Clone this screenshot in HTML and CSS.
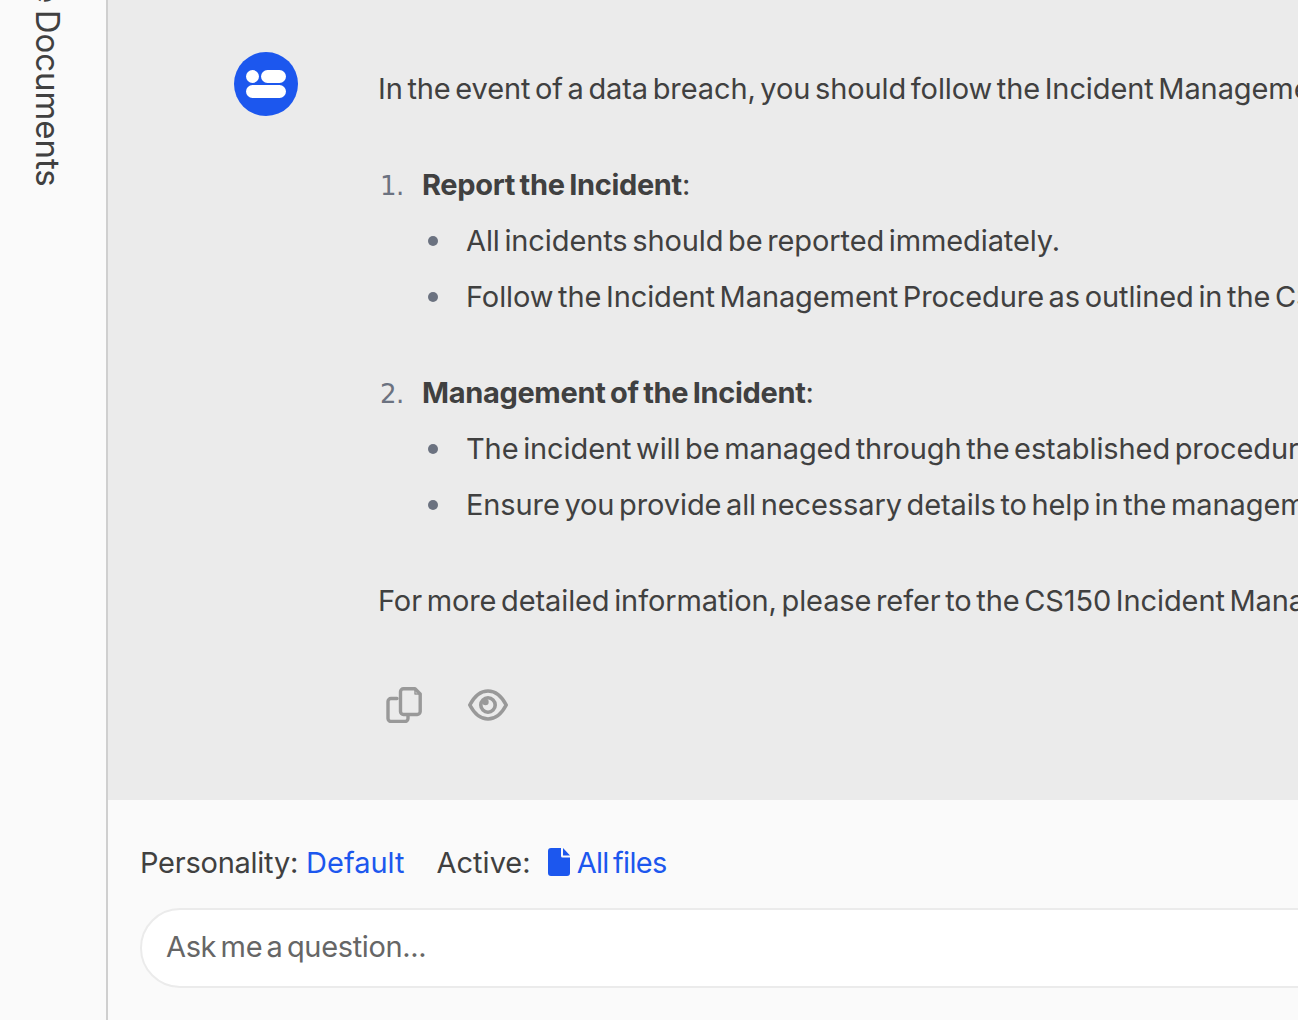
FILE: index.html
```html
<!DOCTYPE html>
<html lang="en">
<head>
<meta charset="utf-8">
<title>Chat</title>
<link rel="stylesheet" href="styles.css">
</head>
<body>
<div class="app">
  <aside class="sidebar">
    <div class="sidebar-label"><span>Active Documents</span></div>
  </aside>
  <main class="main">
    <section class="chat">
      <div class="message">
        <div class="avatar">
          <svg width="40" height="28" viewBox="0 0 40 28" aria-hidden="true">
            <circle cx="6.5" cy="6.5" r="6.5" fill="#fff"/>
            <rect x="15" y="0" width="25" height="13" rx="6.5" fill="#fff"/>
            <rect x="0" y="15" width="40" height="13" rx="6.5" fill="#fff"/>
          </svg>
        </div>
        <div class="body">
          <p class="para">In the event of a data breach, you should follow the Incident Management Procedure outlined in the policy documents:</p>
          <ol class="steps">
            <li><strong>Report the Incident</strong>:
              <ul class="details">
                <li>All incidents should be reported immediately.</li>
                <li>Follow the Incident Management Procedure as outlined in the CS150 policy.</li>
              </ul>
            </li>
            <li><strong>Management of the Incident</strong>:
              <ul class="details">
                <li>The incident will be managed through the established procedure for all staff.</li>
                <li>Ensure you provide all necessary details to help in the management of the incident.</li>
              </ul>
            </li>
          </ol>
          <p class="para">For more detailed information, please refer to the CS150 Incident Management Procedure document.</p>
          <div class="actions">
            <svg class="copy-icon" width="36" height="36" viewBox="0 0 36 36" fill="none" stroke="#999" stroke-width="3.400" stroke-linejoin="round" stroke-linecap="round" aria-hidden="true">
              <path d="M11 11.500H5A3 3 0 0 0 2 14.500V31.500A3 3 0 0 0 5 34.500H19A3 3 0 0 0 22 31.500V28"/>
              <path d="M17.500 1.800H29L34.200 7V24.500A3 3 0 0 1 31.200 27.500H17.500A3 3 0 0 1 14.500 24.500V4.800A3 3 0 0 1 17.500 1.800Z"/>
              <path d="M29 2V7H34" stroke-width="1.500"/>
            </svg>
            <svg class="eye-icon" width="40" height="32" viewBox="0 0 40 32" fill="none" stroke="#999" stroke-width="3.600" aria-hidden="true">
              <path d="M1.800 16C6.500 7 12.500 2 20 2S33.500 7 38.200 16C33.500 25 27.500 30 20 30S6.500 25 1.800 16Z" stroke-linejoin="round"/>
              <circle cx="20" cy="16" r="7.200"/>
              <circle cx="17.500" cy="13" r="3.200" fill="#999" stroke="none"/>
            </svg>
          </div>
        </div>
      </div>
    </section>
    <section class="composer">
      <div class="meta">
        <span class="meta-label label-personality">Personality:</span>
        <span class="meta-link personality">Default</span>
        <span class="meta-label active-label">Active:</span>
        <svg class="file-icon" width="22" height="28" viewBox="0 0 22 28" aria-hidden="true">
          <path d="M3 0H13V8A1.500 1.500 0 0 0 14.500 9.500H22V25A3 3 0 0 1 19 28H3A3 3 0 0 1 0 25V3A3 3 0 0 1 3 0Z" fill="#1c57ee"/>
          <path d="M15 0L22 7.500H15Z" fill="#1c57ee"/>
        </svg>
        <span class="meta-link files">All files</span>
      </div>
      <div class="question">Ask me a question...</div>
    </section>
  </main>
</div>
</body>
</html>
```
FILE: styles.css
```css
* { box-sizing: border-box; }
html, body { margin: 0; height: 100%; overflow: hidden; }
body {
  font-family: "Inter", "Liberation Sans", sans-serif;
  font-size: 29px;
  color: #404040;
  background: #fafafa;
}
.app { display: flex; width: 1298px; height: 1020px; overflow: hidden; }
.sidebar {
  flex: 0 0 108px;
  border-right: 2px solid #cfcfcf;
  background: #fafafa;
  overflow: hidden;
}
.sidebar-label {
  height: 187px;
  width: 106px;
  display: flex;
  flex-direction: column;
  justify-content: flex-end;
  align-items: flex-start;
  padding-left: 29px;
}
.sidebar-label span {
  writing-mode: vertical-rl;
  white-space: nowrap;
  font-size: 33px;
  line-height: 38px;
  letter-spacing: -0.07px;
  word-spacing: -2.5px;
  color: #404040;
}
.main { flex: 1; min-width: 0; display: flex; flex-direction: column; }
.chat { height: 800px; background: #ebebeb; padding: 52px 0 0 126px; overflow: hidden; }
.message { display: flex; gap: 80px; }
.avatar {
  flex: 0 0 64px;
  height: 64px;
  border-radius: 50%;
  background: #1c57ee;
  display: flex;
  align-items: center;
  justify-content: center;
}
.body {
  padding-top: 9px;
  line-height: 56px;
  white-space: nowrap;
  letter-spacing: -0.1px;
  word-spacing: -3.4px;
}
.para { margin: 0; }
.steps { margin: 40px 0; padding: 0 0 0 44px; list-style: none; }
.steps > li + li { margin-top: 40px; }
.steps > li::before {
  content: counter(list-item) ".";
  display: inline-block;
  box-sizing: border-box;
  width: 44px;
  margin-left: -44px;
  padding-left: 2px;
  font-family: "DejaVu Sans", sans-serif;
  font-size: 26px;
  line-height: 1;
  letter-spacing: -0.6px;
  color: #6b7280;
}
.steps strong { font-weight: 700; letter-spacing: -0.33px; word-spacing: -2px; }
.details { margin: 0; padding: 0 0 0 44px; list-style: none; }
.details > li::before {
  content: "";
  display: inline-block;
  width: 10px;
  height: 10px;
  margin-left: -38px;
  margin-right: 28px;
  border-radius: 50%;
  background: #6b7280;
  vertical-align: 5px;
}
.actions { display: flex; align-items: center; gap: 46px; margin-top: 58px; padding-left: 8px; }
.composer { flex: 1; background: #fafafa; padding: 44px 0 0 32px; }
.meta { display: flex; align-items: center; height: 38px; white-space: nowrap; line-height: 38px; }
.label-personality { letter-spacing: -0.25px; }
.meta-link { color: #1c57ee; }
.personality { margin-left: 8px; }
.active-label { margin-left: 32px; }
.file-icon { margin-left: 17px; margin-bottom: 3px; }
.files { margin-left: 7px; letter-spacing: -0.7px; word-spacing: -3px; }
.question {
  margin-top: 26px;
  width: 1400px;
  height: 80px;
  border: 2px solid #ebebeb;
  border-radius: 40px;
  background: #fff;
  padding-left: 24px;
  line-height: 74px;
  color: #666;
  letter-spacing: -0.35px;
  word-spacing: -3.4px;
}
```
